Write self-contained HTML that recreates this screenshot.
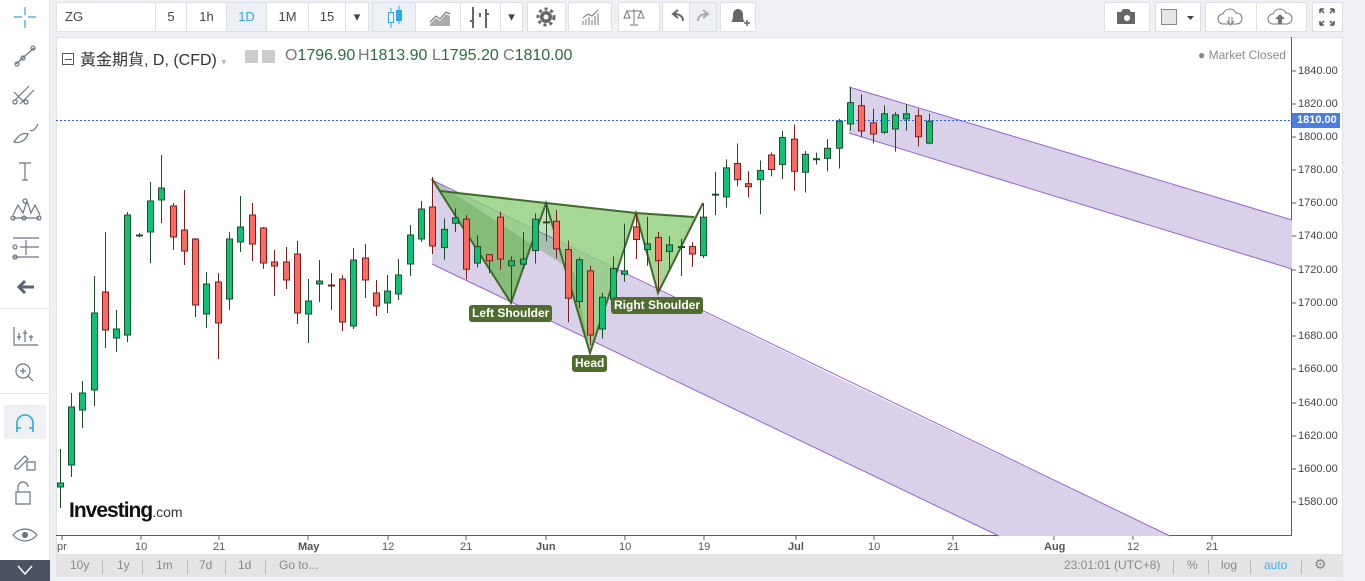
<!DOCTYPE html>
<html><head><meta charset="utf-8"><style>
*{margin:0;padding:0;box-sizing:border-box}
body{width:1365px;height:581px;overflow:hidden;background:#eef0f3;font-family:"Liberation Sans","Noto Sans CJK TC",sans-serif;position:relative}
.abs{position:absolute}
.btn{position:absolute;top:2px;height:30px;background:#fff;border:1px solid #dcdfe4;color:#444;font-size:13px;text-align:center;line-height:28px;font-family:"Liberation Sans Narrow","Liberation Sans",sans-serif}
.tl{position:absolute;top:541px;font-size:11px;color:#555;font-family:"Liberation Sans Narrow","Liberation Sans",sans-serif}
.pl{position:absolute;left:1298px;font-size:11px;color:#444}
.bb{position:absolute;top:558px;font-size:12px;color:#888;font-family:"Liberation Sans Narrow","Liberation Sans",sans-serif}
.sep{position:absolute;top:560px;width:1px;height:14px;background:#bbb}
.lbl{position:absolute;background:#4e6d2e;color:#fff;font-weight:bold;font-size:12px;border-radius:3px;padding:0 3px;height:17px;line-height:17px}
.ohlc{position:absolute;top:47px;font-size:15px;color:#2b6b3f;white-space:nowrap;font-family:"Liberation Sans Narrow","Liberation Sans",sans-serif;font-size:16px}
.ohlc b{font-weight:normal;color:#777}
</style></head><body>
<div class="abs" style="left:0;top:0;width:50px;height:581px;background:#fff;border-right:1px solid #e3e5e9"></div>
<div class="abs" style="left:0;top:308px;width:50px;height:1px;background:#e3e5e9"></div>
<div class="abs" style="left:0;top:393px;width:50px;height:1px;background:#e3e5e9"></div>
<div class="abs" style="left:4px;top:405px;width:42px;height:34px;background:#eef0f3;border-radius:2px"></div>
<div class="abs" style="left:0;top:560px;width:50px;height:21px;background:#4b5362"></div>
<svg class="abs" style="left:0;top:0" width="50" height="581" fill="none" stroke="#6b7585" stroke-width="1.2">
<g stroke="#2aa8e0"><path d="M25 7v8M25 20v8M14 17h8M28 17h8"/></g>
<path d="M16 64l18-16"/><circle cx="17" cy="64" r="2"/><circle cx="23" cy="58" r="2"/><circle cx="33" cy="48" r="2"/>
<path d="M15 100l14-14M20 104l14-14M14 92l10 10"/><circle cx="15" cy="102" r="2"/><circle cx="26" cy="102" r="2"/>
<path d="M14 142c4-6 8-10 14-8-2 6-8 10-14 8zM30 130c2 2 5 0 8-6"/>
<path d="M19 163h12M25 163v17M22 180h6"/>
<path d="M13 215l5-10 5 8 4-12 4 12 4-8 5 10M13 218h26"/><circle cx="13" cy="218" r="2"/><circle cx="24" cy="218" r="2"/><circle cx="39" cy="218" r="2"/><circle cx="25" cy="201" r="2"/>
<path d="M13 238h26M13 257h26M20 247h19M26 240v15"/><circle cx="15" cy="247" r="2"/><circle cx="15" cy="257" r="2"/>
<path d="M34 287H19M25 281l-6 6 6 6" stroke-width="3" stroke="#5a6474"/>
<path d="M14 327v18h24M19 340v-7M25 330v12M31 335v6M17 337h4M23 333h4M29 337h4"/>
<circle cx="23" cy="371" r="7"/><path d="M28 376l5 5M20 371h6M23 368v6"/>
<path d="M17 432v-9a8 8 0 0116 0v9M17 428h4M29 428h4" stroke="#2aa8e0" stroke-width="1.6"/>
<path d="M15 466l10-10 3 3-10 10h-3zM27 462h8v8h-8z"/>
<path d="M18 492v-5a5 5 0 0110 0M16 492h14v12H16z"/>
<path d="M13 535c7-8 17-8 24 0-7 8-17 8-24 0z"/><circle cx="25" cy="535" r="2.5" fill="#6b7585"/>
<path d="M18 566l7 8 7-8" stroke="#fff" stroke-width="1.5"/>
</svg>
<div class="btn" style="left:56px;width:100px;text-align:left;padding-left:8px">ZG</div>
<div class="btn" style="left:155px;width:32px">5</div>
<div class="btn" style="left:186px;width:41px">1h</div>
<div class="btn" style="left:226px;width:41px;background:#edf1f6;color:#2aa8e0">1D</div>
<div class="btn" style="left:266px;width:43px">1M</div>
<div class="btn" style="left:308px;width:38px">15</div>
<div class="btn" style="left:345px;width:24px">▾</div>
<div class="btn" style="left:372px;width:44px;background:#edf1f6"></div>
<div class="btn" style="left:415px;width:46px"></div>
<div class="btn" style="left:460px;width:41px"></div>
<div class="btn" style="left:500px;width:23px">▾</div>
<div class="btn" style="left:527px;width:39px"></div>
<div class="btn" style="left:568px;width:44px"></div>
<div class="btn" style="left:618px;width:42px"></div>
<div class="btn" style="left:662px;width:28px"></div>
<div class="btn" style="left:689px;width:28px;background:#edf1f6"></div>
<div class="btn" style="left:720px;width:36px"></div>
<div class="btn" style="left:1104px;width:46px"></div>
<div class="btn" style="left:1155px;width:46px"></div>
<div class="btn" style="left:1205px;width:52px"></div>
<div class="btn" style="left:1256px;width:51px"></div>
<div class="btn" style="left:1312px;width:31px"></div>
<svg class="abs" style="left:0;top:0" width="1365" height="36">
<g stroke="#2aa8e0" fill="none"><path d="M391 8v20M399 6v18"/><rect x="388.5" y="12.5" width="5" height="10" fill="#fff"/><rect x="396.5" y="10.5" width="5" height="10" fill="#2aa8e0"/></g>
<path d="M430 24l6-6 4 3 6-7 4 2v10h-20z" fill="#aaa"/><path d="M430 22l6-6 4 3 6-7 4 2" stroke="#666" fill="none"/>
<path d="M473 7v21M470 21h3M486 9v19M486 14h3M480 17v-4" stroke="#666" stroke-width="2" fill="none"/>
<circle cx="546" cy="17" r="6" fill="#666"/><circle cx="546" cy="17" r="2.5" fill="#fff"/><circle cx="546" cy="17" r="8" fill="none" stroke="#666" stroke-width="3" stroke-dasharray="3 3"/>
<path d="M583 25v-4M586 25v-6M589 25v-8M592 25v-5M595 25v-9M598 25v-12M583 18l5-4 4 2 6-6" stroke="#777" fill="none"/>
<path d="M634 9v15M627 11h14M627 11l-3 7h6zM641 11l-3 7h6zM630 25h8" stroke="#777" fill="none"/>
<path d="M683 21c0-5-4-7-9-7M678 10l-5 4 5 4" stroke="#666" stroke-width="2" fill="none"/>
<path d="M698 21c0-5 4-7 9-7M703 10l5 4-5 4" stroke="#aaa" stroke-width="2" fill="none"/>
<path d="M731 22c2-2 2-4 2-8a5 5 0 0110 0c0 4 0 6 2 8z" fill="#666"/><path d="M744 23h6M747 20v6" stroke="#666" stroke-width="1.5"/>
<path d="M1117 12h4l2-3h6l2 3h4v12h-18z" fill="#666"/><circle cx="1127" cy="18" r="3" fill="#fff"/>
<rect x="1161.5" y="9.5" width="15" height="15" fill="#e6e6e6" stroke="#888"/><path d="M1187 16h7l-3.5 4z" fill="#444"/>
<path d="M1223 24a5 5 0 010-10 7 7 0 0113-1 5 5 0 011 11z" fill="none" stroke="#777"/><path d="M1229 17v7h3v-7M1227 21l3.5 4 3.5-4" fill="none" stroke="#777"/>
<path d="M1273 24a5 5 0 010-10 7 7 0 0113-1 5 5 0 011 11z" fill="none" stroke="#777"/><path d="M1278 24v-5h-3l5-5 5 5h-3v5z" fill="#777"/>
<path d="M1320 9v4M1320 9h4M1334 9v4M1334 9h-4M1320 25v-4M1320 25h4M1334 25v-4M1334 25h-4M1320 9l4 4M1334 9l-4 4M1320 25l4-4M1334 25l-4-4" stroke="#555" stroke-width="1.5"/>
</svg>
<div class="abs" style="left:56px;top:37px;width:1287px;height:518px;background:#fff;border:1px solid #dfe1e5"></div>
<svg class="abs" style="left:0;top:0" width="1365" height="581">
<g stroke="#5c5c5c"><line x1="56" y1="535.5" x2="1292" y2="535.5"/><line x1="1291.5" y1="37" x2="1291.5" y2="536"/></g>
<polygon points="432,180 849,383 1170,536 999,536 683,384 432,264" fill="#d8d1e9"/>
<polyline points="432,180 1170,536" stroke="#9a63cc" fill="none"/><polyline points="432,264 999,536" stroke="#9a63cc" fill="none"/>
<polygon points="849,87 1292,220 1292,269 849,133" fill="#d8d1e9"/>
<line x1="849" y1="87" x2="1292" y2="220" stroke="#9a63cc"/><line x1="849" y1="133" x2="1292" y2="269" stroke="#9a63cc"/>
<polygon points="440,191 546,203 636,213 694,217 703,203 658,293 636,213 590,353 546,203 511,303" fill="#8fcd7a" fill-opacity="0.8"/>
<polygon points="432,179 511,303 546,203 590,353 574,272" fill="#5a9a4a" fill-opacity="0.35"/>
<polyline points="440,191 546,203 636,213 694,217" fill="none" stroke="#3f6a2c" stroke-width="2"/>
<polyline points="432,179 511,303 546,203 590,353 636,213 658,293 703,203" fill="none" stroke="#3f6a2c" stroke-width="2"/>
<line x1="440" y1="191" x2="432" y2="179" stroke="#3f6a2c" stroke-width="2"/>
<line x1="56" y1="120.5" x2="1292" y2="120.5" stroke="#2962ff" stroke-dasharray="2 2"/>
<g id="cd"></g>
<g stroke="#5c5c5c"><path d="M1292 71h4M1292 104h4M1292 137h4M1292 170h4M1292 203h4M1292 236h4M1292 270h4M1292 303h4M1292 336h4M1292 369h4M1292 403h4M1292 436h4M1292 469h4M1292 502h4"/>
<path d="M62 536v4M141 536v4M219 536v4M308 536v4M388 536v4M466 536v4M546 536v4M625 536v4M704 536v4M796 536v4M874 536v4M953 536v4M1054 536v4M1133 536v4M1212 536v4"/></g>
</svg>
<div class="abs" style="left:1292px;top:113px;width:48px;height:15px;background:#4a7de0;color:#fff;font-weight:bold;font-size:11px;line-height:15px;padding-left:5px">1810.00</div>
<div class="pl" style="top:65px">1840.00</div><div class="pl" style="top:98px">1820.00</div><div class="pl" style="top:131px">1800.00</div><div class="pl" style="top:164px">1780.00</div><div class="pl" style="top:197px">1760.00</div><div class="pl" style="top:230px">1740.00</div><div class="pl" style="top:264px">1720.00</div><div class="pl" style="top:297px">1700.00</div><div class="pl" style="top:330px">1680.00</div><div class="pl" style="top:363px">1660.00</div><div class="pl" style="top:397px">1640.00</div><div class="pl" style="top:430px">1620.00</div><div class="pl" style="top:463px">1600.00</div><div class="pl" style="top:496px">1580.00</div>
<div class="tl" style="left:57px">pr</div><div class="tl" style="left:135px">10</div><div class="tl" style="left:213px">21</div><div class="tl" style="left:298px;font-weight:bold">May</div><div class="tl" style="left:382px">12</div><div class="tl" style="left:460px">21</div><div class="tl" style="left:536px;font-weight:bold">Jun</div><div class="tl" style="left:619px">10</div><div class="tl" style="left:698px">19</div><div class="tl" style="left:788px;font-weight:bold">Jul</div><div class="tl" style="left:868px">10</div><div class="tl" style="left:947px">21</div><div class="tl" style="left:1044px;font-weight:bold">Aug</div><div class="tl" style="left:1127px">12</div><div class="tl" style="left:1206px">21</div>
<div class="lbl" style="left:469px;top:305px">Left Shoulder</div>
<div class="lbl" style="left:572px;top:355px">Head</div>
<div class="lbl" style="left:611px;top:297px">Right Shoulder</div>
<div class="abs" style="left:62px;top:46px;font-size:16px;color:#333;white-space:nowrap"><span style="display:inline-block;width:12px;height:12px;border:1px solid #555;vertical-align:0px;position:relative;margin-right:6px"><span style="position:absolute;left:2px;top:5px;width:7px;height:1px;background:#555"></span></span>黃金期貨, D, (CFD) <span style="color:#bbb;font-size:10px">▾</span></div>
<div class="abs" style="left:245px;top:50px;width:13px;height:13px;background:#ccc"></div>
<div class="abs" style="left:262px;top:50px;width:13px;height:13px;background:#ccc"></div>
<div class="ohlc" style="left:285px"><b>O</b>1796.90</div>
<div class="ohlc" style="left:358px"><b>H</b>1813.90</div>
<div class="ohlc" style="left:432px"><b>L</b>1795.20</div>
<div class="ohlc" style="left:503px"><b>C</b>1810.00</div>
<div class="abs" style="left:1198px;top:48px;font-size:12px;color:#888">● Market Closed</div>
<div class="abs" style="left:69px;top:499px;font-size:21px;font-weight:bold;color:#111;letter-spacing:-1px">Investing<span style="font-size:14px;font-weight:normal;color:#333;letter-spacing:0">.com</span></div>
<div class="abs" style="left:56px;top:555px;width:1287px;height:22px;background:#e4e4e6"></div>
<div class="bb" style="left:70px">10y</div><div class="sep" style="left:102px"></div>
<div class="bb" style="left:117px">1y</div><div class="sep" style="left:142px"></div>
<div class="bb" style="left:156px">1m</div><div class="sep" style="left:187px"></div>
<div class="bb" style="left:199px">7d</div><div class="sep" style="left:225px"></div>
<div class="bb" style="left:238px">1d</div><div class="sep" style="left:265px"></div>
<div class="bb" style="left:279px">Go to...</div>
<div class="bb" style="left:1064px">23:01:01 (UTC+8)</div><div class="sep" style="left:1173px"></div>
<div class="bb" style="left:1187px">%</div><div class="sep" style="left:1208px"></div>
<div class="bb" style="left:1221px">log</div><div class="sep" style="left:1250px"></div>
<div class="bb" style="left:1264px;color:#3bb0e8">auto</div><div class="sep" style="left:1301px"></div>
<div class="bb" style="left:1314px;font-size:14px;top:556px">⚙</div>
<script>
var A=[[60,483,487,449,508,1],[71,465,407,393,477,1],[82,410,393,381,428,1],[94,390,313,276,406,1],[105,292,330,232,348,0],[116,338,329,310,352,1],[127,335,215,212,342,1],[139,235,236,233,237,2],[150,232,201,182,263,1],[161,200,188,155,223,1],[173,206,237,203,250,0],[184,230,251,190,265,0],[195,239,305,238,317,0],[206,314,284,272,328,1],[218,282,323,273,359,0],[229,299,239,232,310,1],[240,242,227,196,252,1],[252,215,244,203,261,0],[263,228,263,227,269,0],[274,262,266,250,296,0],[286,262,280,247,289,0],[297,254,313,241,324,0],[308,314,301,279,343,1],[319,284,281,260,302,1],[331,285,286,273,310,3],[342,279,322,275,331,0],[353,326,260,248,329,1],[365,258,280,244,298,0],[376,293,306,280,316,0],[387,303,291,275,313,1],[398,294,275,259,300,1],[410,264,235,225,276,1],[421,239,209,201,242,1],[432,207,246,177,254,0]];
var B=[[72,496,442,410,532,1],[104,424,408,380,450,1],[137,412,560,400,590,0],[170,542,493,460,555,1],[205,517,535,515,572,0],[238,406,530,390,562,0],[270,550,535,522,660,1],[306,545,530,450,560,1],[339,505,412,395,543,1],[372,420,421,365,478,2],[404,418,500,385,528,0],[438,502,646,475,717,0],[471,656,532,525,675,1],[504,565,755,550,785,0],[539,737,643,630,765,1],[571,650,558,522,665,1],[604,575,565,425,597,1],[640,435,472,395,530,0],[672,502,485,405,550,1],[705,466,535,450,625,0],[738,508,488,462,560,1],[772,493,494,470,580,2],[805,493,515,480,553,0],[838,520,406,365,527,1],[873,338,339,272,400,2],[906,346,260,235,378,1],[939,247,295,188,315,0],[971,307,316,270,347,0],[1007,295,268,238,397,1],[1040,222,265,215,285,0],[1072,250,170,150,293,1],[1107,175,270,132,328,0],[1140,273,220,210,333,1],[1173,233,234,215,250,2],[1205,232,202,175,270,1],[1240,202,122,115,262,1],[1273,130,67,22,150,1],[1306,76,151,42,170,0],[1341,127,160,85,187,0],[1374,155,100,75,160,1],[1406,145,103,95,212,1],[1439,115,100,72,150,1],[1473,106,168,85,197,0],[1507,187,122,100,190,1]];
B.forEach(function(b){var f=2.96;A.push([420+b[0]/f,80+b[1]/f,80+b[2]/f,80+b[3]/f,80+b[4]/f,b[5]]);});
var s='';A.forEach(function(c){var x=Math.round(c[0]),t=Math.min(c[1],c[2]),h=Math.max(Math.abs(c[1]-c[2]),1);
var wc=c[5]==0?'#7a1f1f':'#1f4d2c';s+='<line x1="'+(x+.5)+'" y1="'+c[3]+'" x2="'+(x+.5)+'" y2="'+c[4]+'" stroke="'+wc+'"/>';
if(c[5]>=2){s+='<line x1="'+(x-3)+'" y1="'+(c[1]+.5)+'" x2="'+(x+4)+'" y2="'+(c[1]+.5)+'" stroke="'+(c[5]==3?'#7a1f1f':'#1f4d2c')+'" stroke-width="2"/>';}
else s+='<rect x="'+(x-2.5)+'" y="'+t+'" width="6" height="'+h+'" fill="'+(c[5]?'#0fc172':'#fd6a5f')+'" stroke="'+wc+'"/>';});
document.getElementById('cd').innerHTML=s;
</script>
</body></html>
